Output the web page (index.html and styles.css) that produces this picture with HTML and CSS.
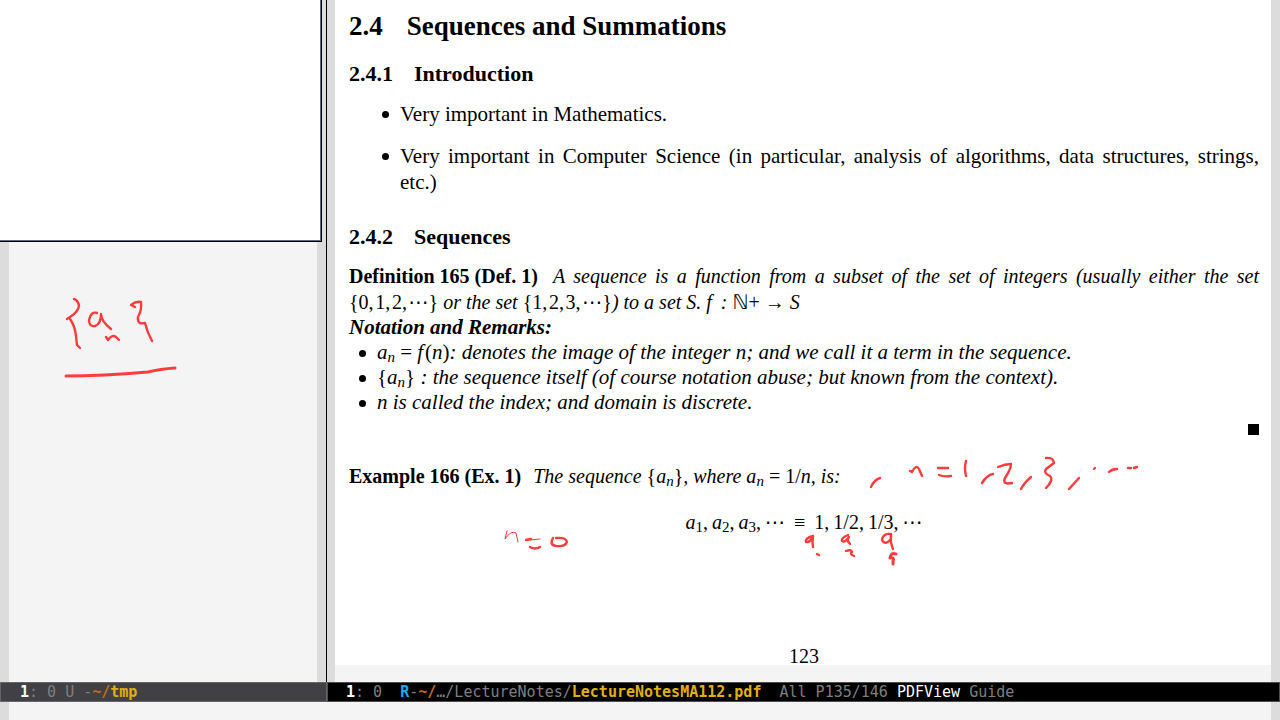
FILE: index.html
```html
<!DOCTYPE html>
<html lang="en">
<head>
<meta charset="utf-8">
<title>LectureNotesMA112.pdf</title>
<link rel="stylesheet" href="styles.css">
</head>
<body>
<div class="frame">
  <section class="window window-left">
    <div class="buffer sketch">
      <svg class="braces-ink" viewBox="0 0 120 84" width="120" height="84" aria-hidden="true">
        <g class="ink">
          <path d="M14 4 Q18 5 19 11 Q18 17 10 22 L7 24 M10 24 Q15 31 16 41 L17 50 L20 53"/>
          <path d="M37 18 Q31 16 29 25 Q29 32 35 31 Q41 29 41 19 M41 19 Q41 26 51 34"/>
          <path d="M46 42 L48 45 Q52 39 56 42 L59 45"/>
          <path d="M75 12 L71 10 Q76 6 81 7 Q82 15 78 22 Q77 30 85 28 Q87 37 92 46"/>
          <path class="thick" d="M6 81 C35 81 65 79 88 77 Q100 74 115 73"/>
        </g>
      </svg>
    </div>
    <div class="preview"></div>
    <footer class="modeline inactive"><b class="num">1</b>: 0 U -<b class="dir">~/</b><b class="file">tmp</b></footer>
  </section>

  <main class="window window-right">
    <article class="buffer page">
      <h1>2.4<span class="title">Sequences and Summations</span></h1>
      <h2>2.4.1<span class="title">Introduction</span></h2>
      <ul class="intro">
        <li>Very important in Mathematics.</li>
        <li><span class="full">Very important in Computer Science (in particular, analysis of algorithms, data structures, strings,</span> etc.)</li>
      </ul>
      <h2 class="second">2.4.2<span class="title">Sequences</span></h2>
      <p class="statement"><span class="full"><b class="label">Definition 165 (Def. 1)</b> A sequence is a function from a subset of the set of integers (usually either the set</span> <span class="up">{0,&#8202;1,&#8202;2,&#8202;⋯}</span> or the set <span class="up">{1,&#8202;2,&#8202;3,&#8202;⋯}</span>) to a set S. f &thinsp;: <span class="up">ℕ+ → </span>S</p>
      <p class="statement remarks"><b>Notation and Remarks:</b></p>
      <ul class="notes">
        <li>a<sub>n</sub> <span class="up">=</span> f&#8202;<span class="up">(</span>n<span class="up">)</span>: denotes the image of the integer n; and we call it a term in the sequence.</li>
        <li><span class="up">{</span>a<sub>n</sub><span class="up">}</span> : the sequence itself (of course notation abuse; but known from the context).</li>
        <li>n is called the index; and domain is discrete.</li>
      </ul>
      <div class="qed"><i></i></div>
      <p class="statement example"><b class="label">Example 166 (Ex. 1)</b> The sequence <span class="up">{</span>a<sub>n</sub><span class="up">}</span>, where a<sub>n</sub> <span class="up">= 1/</span>n, is:</p>
      <p class="equation"><i>a</i><sub>1</sub>,&thinsp;<i>a</i><sub>2</sub>,&thinsp;<i>a</i><sub>3</sub>,&thinsp;⋯ &thinsp;≡&thinsp; 1,&thinsp;1/2,&thinsp;1/3,&thinsp;⋯</p>
      <p class="folio">123</p>

      <svg class="page-ink" viewBox="490 450 660 120" width="660" height="120" aria-hidden="true">
        <g class="ink">
          <path d="M871 487 Q874 480 880 478"/>
          <path d="M910 471 L912 472 Q916 464 919 469 L922 476"/>
          <path d="M938 468 H948 M939 475 Q944 477 951 476"/>
          <path d="M966 461 Q964 468 966 476"/>
          <path d="M982 483 Q987 475 993 474"/>
          <path d="M998 467 Q1005 464 1011 464 Q1011 469 1005 478 Q1002 485 1012 483"/>
          <path d="M1021 489 Q1024 483 1031 477"/>
          <path d="M1046 458 Q1053 457 1054 463 L1046 469 Q1043 473 1050 476 Q1054 480 1046 488"/>
          <path d="M1069 489 L1079 478"/>
          <path d="M1094 469 L1095 468"/>
          <path d="M1109 472 Q1112 469 1117 469 M1128 468 H1131 M1134 468 L1137 467"/>
          <path class="thin" d="M507 531 L505 539 Q511 530 516 533 L518 542"/>
          <path d="M526 540 L531 539"/>
          <path class="thin" d="M530 540 L540 539"/>
          <path d="M530 547 Q535 550 540 547"/>
          <path d="M553 538 Q549 545 556 546 Q565 547 567 542 Q566 537 556 538"/>
          <path d="M813 536 Q805 538 806 542 Q810 543 813 536 Q812 542 813 547"/>
          <path d="M817 554 L819 555"/>
          <path d="M848 535 Q841 538 842 541 Q845 543 849 537 Q846 540 850 544"/>
          <path d="M846 551 Q851 549 852 552 Q849 554 854 556"/>
          <path d="M891 534 Q883 533 882 540 Q885 546 891 539 L891 534 Q890 542 893 549"/>
          <path class="thick" d="M896 554 Q891 552 890 558 Q895 557 893 561 L893 564"/>
        </g>
      </svg>
    </article>
    <footer class="modeline active"><b class="num">1</b>: 0&nbsp; <b class="flag">R</b>-<b class="dir">~/</b>…/LectureNotes/<b class="file">LectureNotesMA112.pdf</b>&nbsp; All P135/146 <span class="mode">PDFView</span> Guide</footer>
  </main>
  <div class="echo"></div>
</div>
</body>
</html>
```
FILE: styles.css
```css
* { box-sizing: border-box; }

body {
  margin: 0;
  background: #f4f4f4;
  color: #000;
  font: 21px/26px "Liberation Serif", "DejaVu Sans", serif;
}

h1, h2, p, ul { margin: 0; padding: 0; }
ul { list-style: none; }

.frame {
  display: grid;
  grid-template-columns: minmax(0, 327fr) minmax(0, 953fr);
  grid-template-rows: 1fr 18px;
  min-height: 100vh;
}

.window {
  position: relative;
  display: flex;
  flex-direction: column;
  min-width: 0;
}

.buffer {
  flex: 1;
  border: solid #dcdcdc;
  border-width: 0 9px;
}

.window-left .buffer { box-shadow: 1px 0 #000; margin-right: 1px; }

.sketch { padding: 295px 0 0 51px; }
.braces-ink { display: block; }

.preview {
  position: absolute;
  top: 0;
  left: 0;
  right: 5px;
  height: 242px;
  background: #fff;
  border: solid #000;
  border-width: 0 1px 1px 0;
  box-shadow: inset -1px -1px #5b6880;
}

.page {
  position: relative;
  display: flex;
  flex-direction: column;
  border-left-width: 8px;
  padding: 12px 12px 12px 14px;
  background: linear-gradient(#fff, #fff) no-repeat 0 0 / 100% calc(100% - 17px);
}

h1 { font-size: 27px; line-height: 28px; }
h1 .title { margin-left: 24px; }
h2 { font-size: 22px; line-height: 26px; margin-top: 21px; }
h2 .title { margin-left: 21px; }
.second { margin-top: 29px; }

.full { display: block; text-align-last: justify; white-space: nowrap; }

.intro { margin-top: 14px; padding-left: 51px; }
.intro li + li { margin-top: 16px; }
li { position: relative; }
li::before {
  content: "";
  position: absolute;
  top: 10px;
  left: -18px;
  width: 7px;
  height: 7px;
  border-radius: 50%;
  background: #000;
}

.statement, .equation, .folio { font-size: 20px; }
.statement { font-style: italic; }
.second + .statement { margin-top: 13px; }
.statement .label { display: inline-block; font-style: normal; margin-right: 7px; }
.up { font-style: normal; }
sub { font-size: 15px; line-height: 0; vertical-align: -3px; }

.statement.remarks { font-size: 21px; line-height: 25px; }
.notes { padding-left: 28px; font-style: italic; line-height: 25px; }

.qed { display: flex; justify-content: flex-end; padding-top: 9px; }
.qed i { width: 11px; height: 11px; background: #000; }

.example { margin-top: 28px; }
.equation { margin-top: 20px; text-align: center; }
.folio { margin-top: 108px; text-align: center; }

.ink {
  fill: none;
  stroke: #ff3b3b;
  stroke-width: 2.4;
  stroke-linecap: round;
  stroke-linejoin: round;
}
.thin { stroke-width: 1; }
.thick { stroke-width: 3; }

.page-ink { position: absolute; top: 450px; left: 155px; }

.modeline {
  height: 20px;
  padding-left: 19px;
  border: 1px solid #666;
  color: #7f7f7f;
  font: 15px/18px "DejaVu Sans Mono", monospace;
  white-space: nowrap;
  overflow: hidden;
}
.inactive { background: #404045; }
.active { background: #000; border-color: #4d4d4d; padding-left: 18px; }
.num, .mode { color: #fff; }
.dir { color: #c96a10; }
.file { color: #e0b010; }
.flag { color: #00b0ff; }

.echo {
  grid-column: 1 / -1;
  border: solid #dcdcdc;
  border-width: 0 9px;
}
```
